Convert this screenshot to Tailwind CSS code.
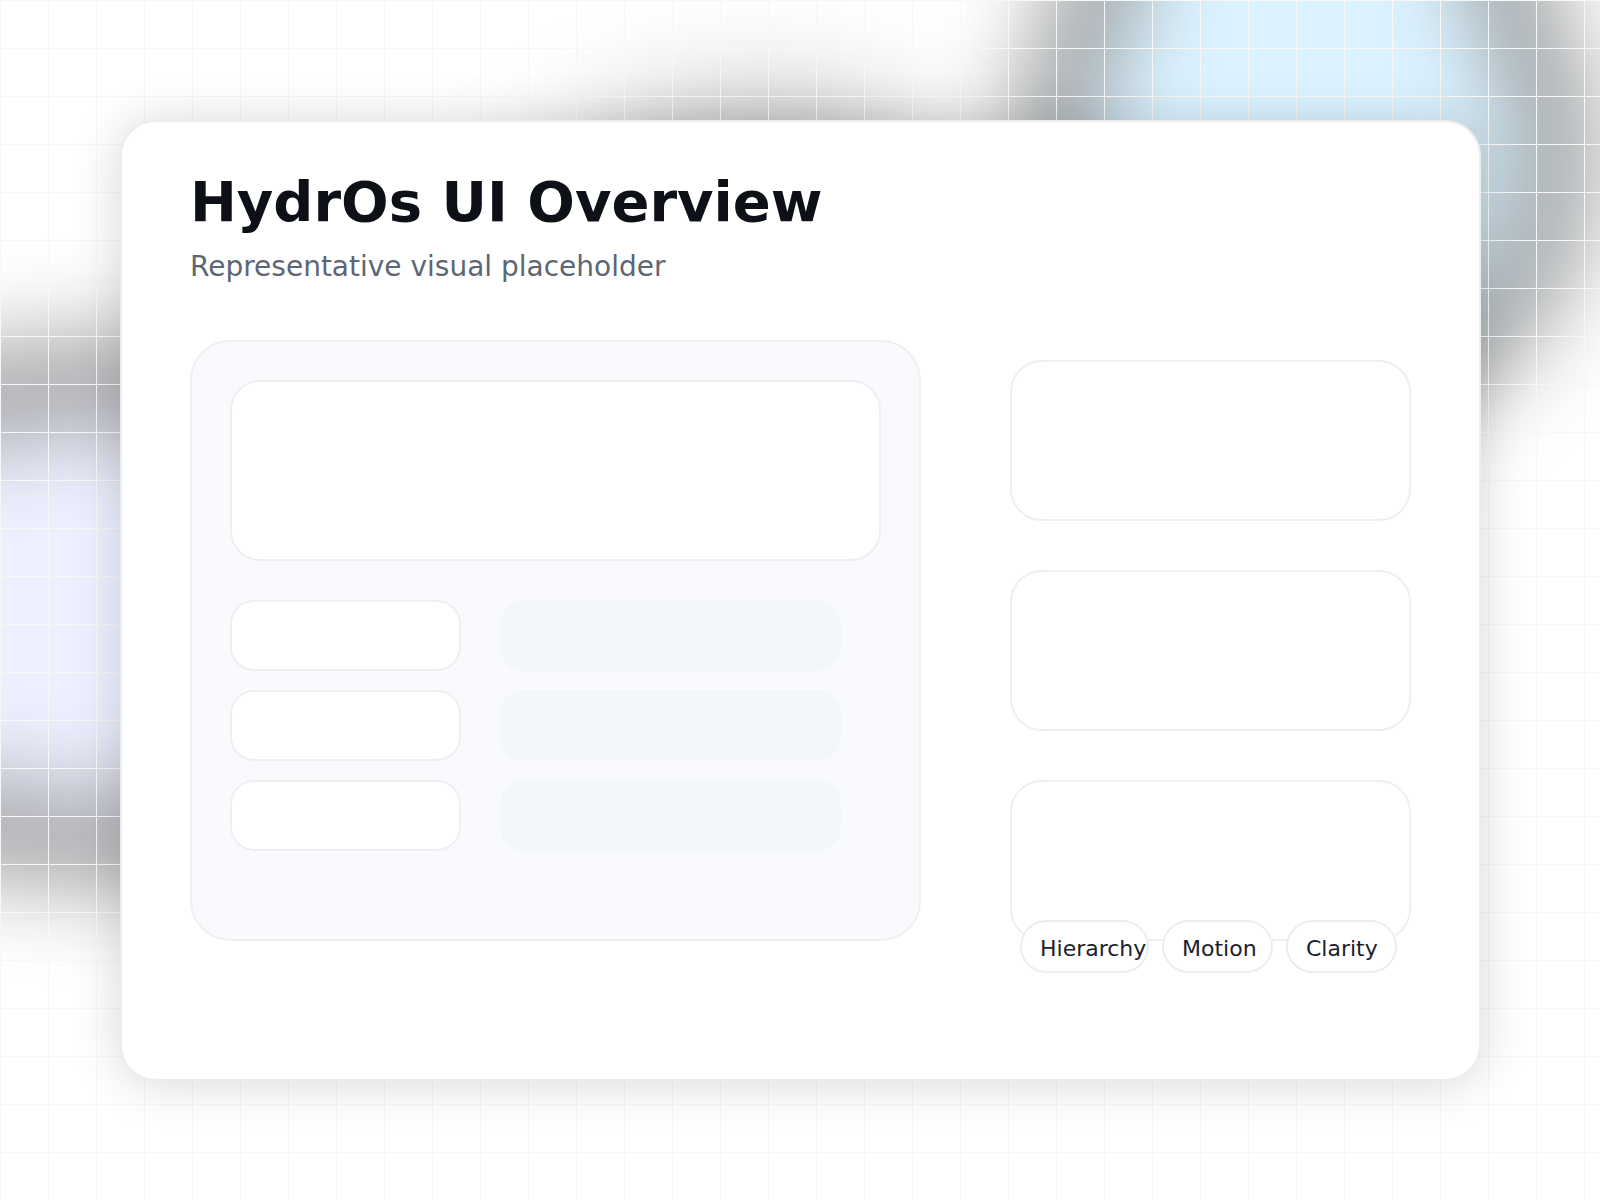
<!DOCTYPE html>
<html lang="en">
<head>
  <meta charset="UTF-8">
  <meta name="viewport" content="width=device-width, initial-scale=1.0">
  <title>HydrOs UI Overview</title>
  <script src="https://cdn.jsdelivr.net/npm/@tailwindcss/browser@4"></script>
</head>
<body class="bg-white font-['DejaVu_Sans',sans-serif]">

  <div class="relative min-h-screen overflow-hidden">

    <!-- Background glows -->
    <svg class="absolute inset-0 w-full h-full" aria-hidden="true">
      <defs>
        <filter id="glowSky" filterUnits="userSpaceOnUse" x="700" y="-500" width="1200" height="1300" color-interpolation-filters="sRGB">
          <feGaussianBlur stdDeviation="56" />
          <feColorMatrix values="0 0 0 0.86 0  0 0 0 0.95 0  0 0 0 1 0  0 0 0 1 0" />
        </filter>
        <filter id="glowIndigo" filterUnits="userSpaceOnUse" x="-500" y="0" width="1300" height="1200" color-interpolation-filters="sRGB">
          <feGaussianBlur stdDeviation="60" />
          <feColorMatrix values="0 0 0 0.93 0  0 0 0 0.94 0  0 0 0 1 0  0 0 0 1 0" />
        </filter>
        <filter id="glowMint" filterUnits="userSpaceOnUse" x="200" y="-200" width="1200" height="1200" color-interpolation-filters="sRGB">
          <feGaussianBlur stdDeviation="75" />
          <feColorMatrix values="0 0 0 0.93 0  0 0 0 0.99 0  0 0 0 0.98 0  0 0 0 1 0" />
        </filter>
      </defs>
      <g filter="url(#glowSky)">
        <circle cx="1304" cy="156" r="256" />
        <rect x="1106" y="-400" width="396" height="420" />
      </g>
      <g filter="url(#glowIndigo)">
        <circle cx="100" cy="612" r="236" />
        <rect x="-400" y="400" width="420" height="424" />
      </g>
      <circle cx="762" cy="400" r="242" filter="url(#glowMint)" />
    </svg>

    <!-- Grid lines -->
    <div class="absolute inset-0 bg-[linear-gradient(to_right,#f6f7f7_1px,transparent_1px),linear-gradient(to_bottom,#f6f7f7_1px,transparent_1px)] bg-[size:48px_48px]"></div>

    <main class="relative pl-[120px] pr-[119px] py-[120px]">
      <div class="bg-white border-2 border-[#eceeee] rounded-[36px] px-[68px] pt-12 pb-[106px] shadow-[0_2px_50px_rgba(0,0,0,0.16)]">

        <!-- Heading -->
        <header class="h-[170px]">
          <h1 class="text-[56px] leading-[64px] font-bold text-[#0d1017]">HydrOs UI Overview</h1>
          <p class="mt-[15px] text-[28px] leading-9 text-[#5d6673]">Representative visual placeholder</p>
        </header>

        <div class="grid grid-cols-[731fr_401fr] gap-[89px] items-start">

          <!-- Main panel -->
          <section class="h-[601px] bg-[#f9fafe] border-2 border-[#eeefef] rounded-[40px] p-[38px]">
            <div class="h-[181px] bg-white border-2 border-[#eeefef] rounded-[30px]"></div>
            <div class="mt-[39px] mr-10 grid grid-cols-[231fr_341fr] gap-x-[39px] gap-y-[19px]">
              <div class="h-[71px] bg-white border-2 border-[#eeefef] rounded-3xl"></div>
              <div class="h-[71px] bg-[#f2f7fb] border-2 border-[#f4f6f8] rounded-3xl"></div>
              <div class="h-[71px] bg-white border-2 border-[#eeefef] rounded-3xl"></div>
              <div class="h-[71px] bg-[#f2f7fb] border-2 border-[#f4f6f8] rounded-3xl"></div>
              <div class="h-[71px] bg-white border-2 border-[#eeefef] rounded-3xl"></div>
              <div class="h-[71px] bg-[#f2f7fb] border-2 border-[#f4f6f8] rounded-3xl"></div>
            </div>
          </section>

          <!-- Side cards -->
          <aside class="pt-5">
            <div class="flex flex-col gap-[49px]">
              <div class="h-[161px] bg-white border-2 border-[#eeefef] rounded-4xl"></div>
              <div class="h-[161px] bg-white border-2 border-[#eeefef] rounded-4xl"></div>
              <div class="h-[161px] bg-white border-2 border-[#eeefef] rounded-4xl"></div>
            </div>
            <ul class="relative -mt-[21px] ml-[10px] flex gap-[13px] text-[22px] leading-[53px] text-[#1b222c] whitespace-nowrap">
              <li class="w-[129px] h-[53px] pl-[18px] bg-white border-2 border-[#eceeee] rounded-full">Hierarchy</li>
              <li class="w-[111px] h-[53px] pl-[18px] bg-white border-2 border-[#eceeee] rounded-full">Motion</li>
              <li class="w-[111px] h-[53px] pl-[18px] bg-white border-2 border-[#eceeee] rounded-full">Clarity</li>
            </ul>
          </aside>

        </div>
      </div>
    </main>
  </div>

</body>
</html>
